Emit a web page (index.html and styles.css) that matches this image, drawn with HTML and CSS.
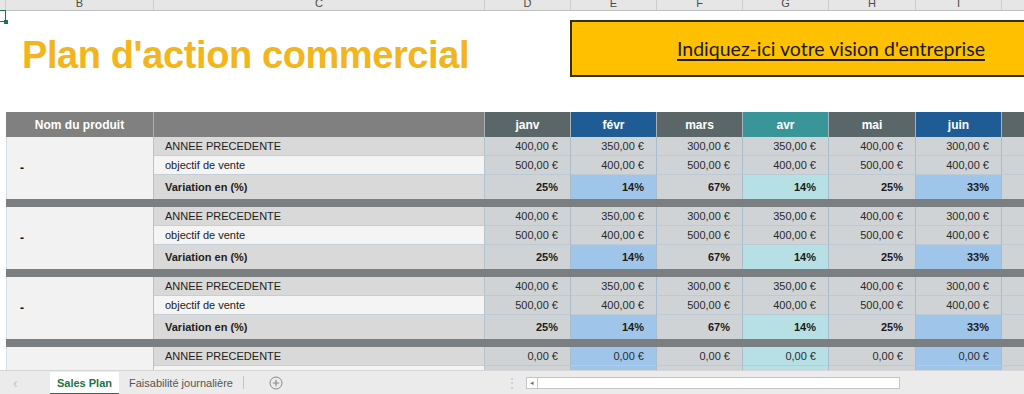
FILE: index.html
```html
<!DOCTYPE html>
<html lang="fr">
<head>
  <meta charset="UTF-8">
  <meta name="viewport" content="width=device-width, initial-scale=1.0">
  <title>Plan d'action commercial</title>
  <link rel="stylesheet" href="styles.css">
</head>
<body>

  <div class="excel">
    <!-- column letters -->
    <div class="colbar">
      <div class="col w-a"></div>
      <div class="col w-b">B</div>
      <div class="col w-c">C</div>
      <div class="col w-m">D</div>
      <div class="col w-m">E</div>
      <div class="col w-m">F</div>
      <div class="col w-m">G</div>
      <div class="col w-h">H</div>
      <div class="col w-m">I</div>
      <div class="col w-j"></div>
    </div>
    <div class="cell-cursor"><span class="handle"></span></div>

    <div class="top">
      <h1 class="title">Plan d'action commercial</h1>
      <div class="vision"><span>Indiquez-ici votre vision d'entreprise</span></div>
    </div>

    <div class="sheet">
      <div class="grid head">
        <div class="h">Nom du produit</div>
        <div class="h"></div>
        <div class="h m-dark">janv</div>
        <div class="h m-blue">févr</div>
        <div class="h m-dark">mars</div>
        <div class="h m-teal">avr</div>
        <div class="h m-dark">mai</div>
        <div class="h m-blue">juin</div>
        <div class="h m-dark"></div>
      </div>

      <div class="grid block">
        <div class="prod">-</div>
        <div class="lbl">ANNEE PRECEDENTE</div>
        <div class="v">400,00 €</div><div class="v">350,00 €</div><div class="v">300,00 €</div><div class="v">350,00 €</div><div class="v">400,00 €</div><div class="v">300,00 €</div><div class="v"></div>
        <div class="lbl obj">objectif de vente</div>
        <div class="v">500,00 €</div><div class="v">400,00 €</div><div class="v">500,00 €</div><div class="v">400,00 €</div><div class="v">500,00 €</div><div class="v">400,00 €</div><div class="v"></div>
        <div class="lbl var">Variation en (%)</div>
        <div class="v var">25%</div><div class="v var blue">14%</div><div class="v var">67%</div><div class="v var teal">14%</div><div class="v var">25%</div><div class="v var blue">33%</div><div class="v var"></div>
      </div>
      <div class="sep"></div>

      <div class="grid block">
        <div class="prod">-</div>
        <div class="lbl">ANNEE PRECEDENTE</div>
        <div class="v">400,00 €</div><div class="v">350,00 €</div><div class="v">300,00 €</div><div class="v">350,00 €</div><div class="v">400,00 €</div><div class="v">300,00 €</div><div class="v"></div>
        <div class="lbl obj">objectif de vente</div>
        <div class="v">500,00 €</div><div class="v">400,00 €</div><div class="v">500,00 €</div><div class="v">400,00 €</div><div class="v">500,00 €</div><div class="v">400,00 €</div><div class="v"></div>
        <div class="lbl var">Variation en (%)</div>
        <div class="v var">25%</div><div class="v var blue">14%</div><div class="v var">67%</div><div class="v var teal">14%</div><div class="v var">25%</div><div class="v var blue">33%</div><div class="v var"></div>
      </div>
      <div class="sep"></div>

      <div class="grid block">
        <div class="prod">-</div>
        <div class="lbl">ANNEE PRECEDENTE</div>
        <div class="v">400,00 €</div><div class="v">350,00 €</div><div class="v">300,00 €</div><div class="v">350,00 €</div><div class="v">400,00 €</div><div class="v">300,00 €</div><div class="v"></div>
        <div class="lbl obj">objectif de vente</div>
        <div class="v">500,00 €</div><div class="v">400,00 €</div><div class="v">500,00 €</div><div class="v">400,00 €</div><div class="v">500,00 €</div><div class="v">400,00 €</div><div class="v"></div>
        <div class="lbl var">Variation en (%)</div>
        <div class="v var">25%</div><div class="v var blue">14%</div><div class="v var">67%</div><div class="v var teal">14%</div><div class="v var">25%</div><div class="v var blue">33%</div><div class="v var"></div>
      </div>
      <div class="sep"></div>

      <div class="grid block">
        <div class="prod"></div>
        <div class="lbl">ANNEE PRECEDENTE</div>
        <div class="v">0,00 €</div><div class="v blue">0,00 €</div><div class="v">0,00 €</div><div class="v teal">0,00 €</div><div class="v">0,00 €</div><div class="v blue">0,00 €</div><div class="v"></div>
        <div class="lbl obj">objectif de vente</div>
        <div class="v">0,00 €</div><div class="v blue">0,00 €</div><div class="v">0,00 €</div><div class="v teal">0,00 €</div><div class="v">0,00 €</div><div class="v blue">0,00 €</div><div class="v"></div>
        <div class="lbl var">Variation en (%)</div>
        <div class="v var"></div><div class="v var blue"></div><div class="v var"></div><div class="v var teal"></div><div class="v var"></div><div class="v var blue"></div><div class="v var"></div>
      </div>
    </div>

    <!-- sheet tabs -->
    <div class="tabs">
      <span class="nav">&#8249;</span>
      <div class="tab active">Sales Plan</div>
      <div class="tab">Faisabilité journalière</div>
      <span class="divider"></span>
      <svg class="add" width="14" height="14" viewBox="0 0 14 14">
        <circle cx="7" cy="7" r="6" fill="none" stroke="#8a8a8a" stroke-width="1"/>
        <path d="M7 3.8v6.4M3.8 7h6.4" stroke="#8a8a8a" stroke-width="1.2"/>
      </svg>
      <span class="grip">&#8942;</span>
      <div class="hscroll"><span class="arrow">&#9666;</span></div>
    </div>
  </div>

</body>
</html>
```

FILE: styles.css
```css
* {
  box-sizing: border-box;
}

body {
  margin: 0;
  background-color: #fff;
  font-family: 'Liberation Sans', Arial, sans-serif;
}

.excel {
  width: 1024px;
  height: 394px;
  overflow: hidden;
  position: relative;
  display: flex;
  flex-direction: column;
}

/* Column letters bar */
.colbar {
  flex: none;
  height: 11px;
  display: flex;
  background-color: #e6e6e6;
  border-bottom: 1px solid #c2c2c2;
  overflow: hidden;
}

.col {
  flex: none;
  height: 14px;
  margin-top: -4px;
  border-right: 1px solid #cdcdcd;
  font-size: 11px;
  line-height: 14px;
  color: #4a4a4a;
  text-align: center;
}

.w-a { width: 6px; }
.w-b { width: 148px; }
.w-c { width: 331px; }
.w-m { width: 86px; }
.w-h { width: 87px; }
.w-j { width: 60px; }

.cell-cursor {
  position: absolute;
  left: -3px;
  top: 10px;
  width: 9px;
  height: 12px;
  border: 1.5px solid #217346;
}

.cell-cursor .handle {
  position: absolute;
  right: -3px;
  bottom: -3px;
  width: 4px;
  height: 4px;
  background-color: #217346;
}

/* Title area */
.top {
  flex: none;
  height: 101px;
  display: flex;
}

.title {
  flex: none;
  width: 570px;
  margin: 0;
  padding: 25px 0 0 22px;
  font-size: 38px;
  line-height: 38px;
  letter-spacing: -0.4px;
  font-weight: bold;
  color: #f3b51d;
}

.vision {
  flex: none;
  width: 470px;
  height: 57px;
  margin-top: 9px;
  padding: 0 0 0 105px;
  display: flex;
  align-items: center;
  background-color: #ffc000;
  border: 2px solid #3b2c08;
  font-family: 'Lato', sans-serif;
  font-size: 19.5px;
  color: #1c1a14;
  text-decoration: underline;
  text-decoration-thickness: 1.5px;
  text-underline-offset: 3px;
}

/* Table */
.sheet {
  flex: none;
  height: 258px;
  margin-left: 6px;
  overflow: hidden;
}

.grid {
  display: grid;
  grid-template-columns: 148px 331px 86px 86px 86px 86px 87px 86px 60px;
}

.head {
  grid-template-rows: 25px;
}

.h {
  background-color: #808080;
  border-right: 1px solid #a9b2b8;
  color: #fff;
  font-weight: bold;
  font-size: 12px;
  display: flex;
  align-items: center;
  justify-content: center;
}

.m-dark { background-color: #5a6668; }
.m-blue { background-color: #1f5c96; }
.m-teal { background-color: #3a9598; }

.block {
  grid-template-rows: 19px 19px 24px;
}

.prod {
  grid-row: span 3;
  background-color: #f2f2f2;
  border-left: 1px solid #d3dde3;
  border-right: 1px solid #b3c3cf;
  padding-left: 13px;
  display: flex;
  align-items: center;
  font-weight: bold;
  font-size: 12px;
  color: #111;
}

.lbl {
  background-color: #d9d9d9;
  border-right: 1px solid #b3c3cf;
  border-bottom: 1px solid #c3cfd8;
  padding-left: 11px;
  display: flex;
  align-items: center;
  font-size: 11px;
  color: #222;
}

.lbl.obj {
  background-color: #f4f4f4;
}

.lbl.var {
  font-weight: bold;
  border-bottom: none;
}

.v {
  background-color: #d0d3d5;
  border-right: 1px solid #a9bccb;
  border-bottom: 1px solid #bccad4;
  padding-right: 12px;
  display: flex;
  align-items: center;
  justify-content: flex-end;
  font-size: 11px;
  color: #2a2a2a;
}

.v.var {
  font-weight: bold;
  color: #1a1a1a;
  border-bottom: none;
}

.v.blue { background-color: #9fc6ea; }
.v.teal { background-color: #b6e0e6; }

.sep {
  height: 8px;
  background-color: #7b7f81;
}

/* Sheet tabs */
.tabs {
  flex: none;
  height: 24px;
  display: flex;
  align-items: center;
  background-color: #ebebeb;
  border-top: 1px solid #d6d6d6;
  font-size: 11px;
}

.nav {
  width: 50px;
  padding-left: 13px;
  color: #c4c4c4;
  font-size: 14px;
}

.tab {
  height: 100%;
  padding: 0 10px;
  display: flex;
  align-items: center;
  color: #555;
}

.tab.active {
  width: 69px;
  justify-content: center;
  padding: 0;
  margin-top: 2px;
  background-color: #fff;
  border-bottom: 2px solid #217346;
  color: #217346;
  font-weight: bold;
}

.divider {
  width: 1px;
  height: 13px;
  background-color: #c4c4c4;
}

.add {
  margin-left: 25px;
}

.grip {
  margin-left: 223px;
  color: #c8c8c8;
  font-size: 12px;
}

.hscroll {
  width: 374px;
  height: 12px;
  margin-left: 8px;
  background-color: #fff;
  border: 1px solid #c6c6c6;
  display: flex;
  align-items: center;
}

.hscroll .arrow {
  width: 11px;
  height: 100%;
  border-right: 1px solid #c6c6c6;
  font-size: 7px;
  line-height: 10px;
  color: #777;
  text-align: center;
}
```
